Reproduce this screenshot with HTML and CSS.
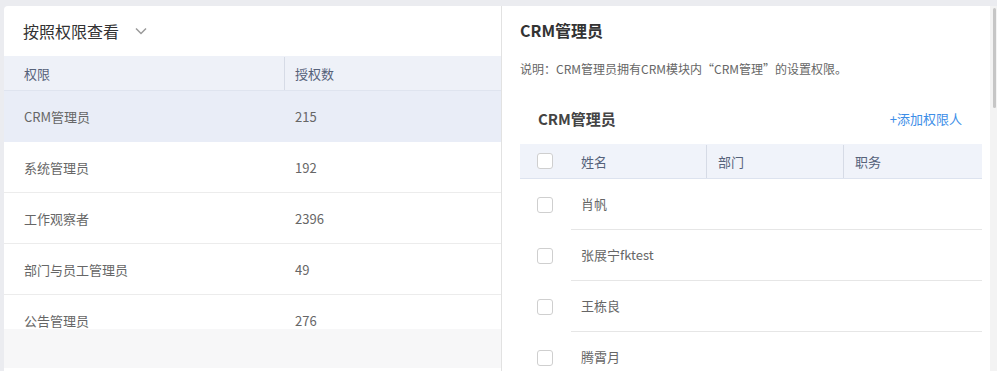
FILE: index.html
```html
<!DOCTYPE html>
<html lang="zh-CN">
  <head>
    <meta charset="UTF-8" />
    <title>权限管理</title>
    <link rel="stylesheet" href="styles.css">
  </head>
  <body>
    <div class="page">
      <div class="left">
        <div class="left-head">
          <span class="left-title">按照权限查看</span>
          <svg class="chevron" width="12" height="8" viewBox="0 0 12 8"><path d="M1 1.5l5 5 5-5" fill="none" stroke="#9a9a9a" stroke-width="1.5"/></svg>
        </div>
        <div class="perm-head">
          <div class="col-name">权限</div>
          <div class="col-count"><span class="sep"></span>授权数</div>
        </div>
        <div class="perm-list">
          <div class="perm-row active"><div class="col-name">CRM管理员</div><div class="col-count">215</div></div>
          <div class="perm-row"><div class="col-name">系统管理员</div><div class="col-count">192</div></div>
          <div class="perm-row"><div class="col-name">工作观察者</div><div class="col-count">2396</div></div>
          <div class="perm-row"><div class="col-name">部门与员工管理员</div><div class="col-count">49</div></div>
          <div class="perm-row"><div class="col-name">公告管理员</div><div class="col-count">276</div></div>
        </div>
        <div class="left-foot"></div>
      </div>

      <div class="right">
        <h2 class="right-title">CRM管理员</h2>
        <p class="desc">说明：CRM管理员拥有CRM模块内“CRM管理”的设置权限。</p>
        <div class="section-head">
          <span class="section-title">CRM管理员</span>
          <a class="add-link">+添加权限人</a>
        </div>
        <div class="user-table">
          <div class="user-head">
            <div class="c-check"><span class="box"></span></div>
            <div class="c-name">姓名</div>
            <div class="c-dept"><span class="sep"></span>部门</div>
            <div class="c-job"><span class="sep"></span>职务</div>
          </div>
          <div class="user-row"><div class="c-check"><span class="box"></span></div><div class="c-rest">肖帆</div></div>
          <div class="user-row"><div class="c-check"><span class="box"></span></div><div class="c-rest">张展宁fktest</div></div>
          <div class="user-row"><div class="c-check"><span class="box"></span></div><div class="c-rest">王栋良</div></div>
          <div class="user-row"><div class="c-check"><span class="box"></span></div><div class="c-rest">腾霄月</div></div>
        </div>
      </div>

      <div class="scrollbar"><div class="thumb"></div></div>
    </div>
  </body>
</html>
```

FILE: styles.css
```css
* { box-sizing: border-box; }
html, body {
  margin: 0;
  height: 100%;
  overflow: hidden;
}
body {
  font-family: "Noto Sans CJK SC", "Noto Sans", sans-serif;
  background: #ebecf0;
  color: #666;
  font-size: 13px;
}
.page {
  display: flex;
  height: 365px;
  margin: 6px 0 0 4px;
}

/* left column */
.left {
  width: 497px;
  background: #fff;
  border-radius: 4px 0 0 0;
  display: flex;
  flex-direction: column;
}
.left-head {
  height: 50px;
  display: flex;
  align-items: center;
  padding-left: 19px;
}
.left-title {
  font-size: 16px;
  color: #333;
}
.chevron { margin-left: 16px; }
.perm-head {
  height: 35px;
  display: flex;
  align-items: center;
  background: #eef1f8;
  border-bottom: 1px solid #dfe4ef;
  color: #56627a;
}
.col-name {
  width: 280px;
  padding-left: 20px;
}
.col-count {
  flex: 1;
  position: relative;
  padding-left: 11px;
}
.perm-head .sep,
.user-head .sep {
  position: absolute;
  left: 0;
  top: -7px;
  bottom: -7px;
  border-left: 1px solid #d6dbe6;
}
.perm-list {
  height: 238px;
  overflow: hidden;
}
.perm-row {
  height: 51px;
  display: flex;
  align-items: center;
  border-bottom: 1px solid #ececec;
}
.perm-row.active {
  background: #e9edf7;
  border-bottom-color: #e9edf7;
}
.left-foot {
  height: 39px;
  background: #f7f7f8;
}

/* right column */
.right {
  flex: 1;
  background: #fff;
  border-left: 1px solid #e2e2e2;
  padding: 0 8px 0 18px;
  overflow: hidden;
}
.right-title {
  margin: 0;
  height: 48px;
  line-height: 48px;
  font-size: 16px;
  font-weight: bold;
  color: #333;
}
.desc {
  margin: 0;
  height: 30px;
  line-height: 30px;
  font-size: 12px;
  color: #666;
}
.section-head {
  height: 60px;
  display: flex;
  align-items: center;
  justify-content: space-between;
  padding: 8px 20px 0 18px;
}
.section-title {
  font-size: 15px;
  font-weight: bold;
  color: #444;
}
.add-link {
  color: #3d8ee8;
  font-size: 13px;
  cursor: pointer;
}
.user-head {
  height: 35px;
  display: flex;
  align-items: center;
  background: #f0f3fa;
  border-bottom: 1px solid #dde3ef;
  color: #56627a;
}
.c-check {
  width: 51px;
  padding-left: 17px;
  display: flex;
  align-items: center;
}
.box {
  width: 16px;
  height: 16px;
  border: 1px solid #cfcfcf;
  border-radius: 3px;
  background: #fff;
}
.c-name {
  width: 135px;
  padding-left: 10px;
}
.c-dept {
  width: 137px;
  position: relative;
  padding-left: 12px;
}
.c-job {
  flex: 1;
  position: relative;
  padding-left: 12px;
}
.user-row {
  height: 51px;
  display: flex;
  align-items: center;
}
.user-row .c-rest {
  flex: 1;
  height: 51px;
  line-height: 50px;
  padding-left: 10px;
  border-bottom: 1px solid #e6e6e6;
}

/* fake page scrollbar */
.scrollbar {
  width: 7px;
  background: #f3f3f3;
  padding: 2px 1px 0 3px;
}
.thumb {
  height: 100px;
  background: #c6c6c6;
  border-radius: 2px;
}
```
